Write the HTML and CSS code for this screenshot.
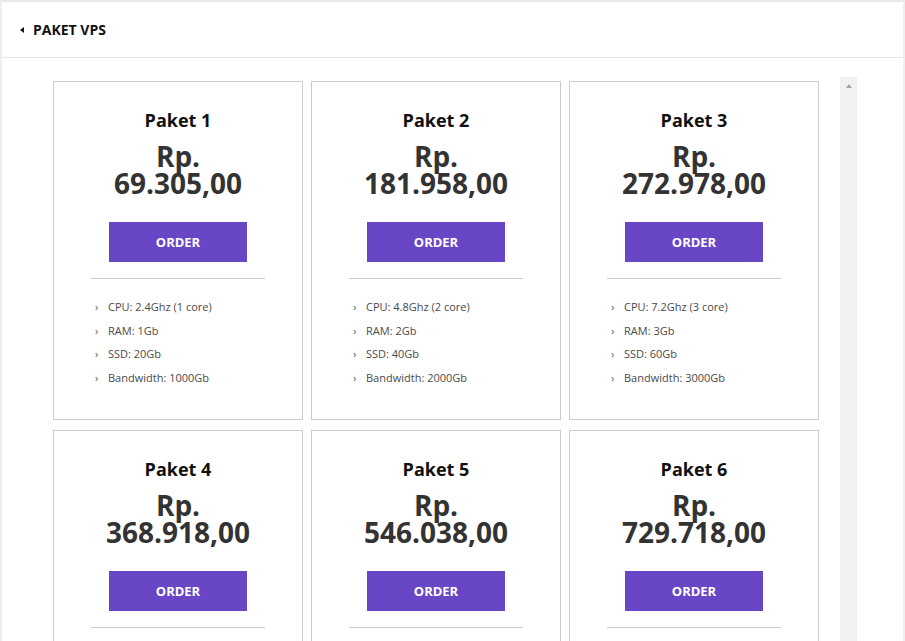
FILE: index.html
```html
<!DOCTYPE html>
<html lang="id">
<head>
<meta charset="utf-8">
<title>Paket VPS</title>
<link rel="stylesheet" href="styles.css">
</head>
<body>
<div class="frame">
  <header class="header">
    <span class="back"></span>
    <span class="header-title">PAKET VPS</span>
  </header>
  <main class="main">
    <div class="scroller">
      <div class="grid">
        <div class="card">
          <h2 class="card-title">Paket 1</h2>
          <div class="price">Rp.<br>69.305,00</div>
          <a class="order">ORDER</a>
          <hr class="divider">
          <ul class="specs">
            <li>CPU: 2.4Ghz (1 core)</li>
            <li>RAM: 1Gb</li>
            <li>SSD: 20Gb</li>
            <li>Bandwidth: 1000Gb</li>
          </ul>
        </div>
        <div class="card">
          <h2 class="card-title">Paket 2</h2>
          <div class="price">Rp.<br>181.958,00</div>
          <a class="order">ORDER</a>
          <hr class="divider">
          <ul class="specs">
            <li>CPU: 4.8Ghz (2 core)</li>
            <li>RAM: 2Gb</li>
            <li>SSD: 40Gb</li>
            <li>Bandwidth: 2000Gb</li>
          </ul>
        </div>
        <div class="card">
          <h2 class="card-title">Paket 3</h2>
          <div class="price">Rp.<br>272.978,00</div>
          <a class="order">ORDER</a>
          <hr class="divider">
          <ul class="specs">
            <li>CPU: 7.2Ghz (3 core)</li>
            <li>RAM: 3Gb</li>
            <li>SSD: 60Gb</li>
            <li>Bandwidth: 3000Gb</li>
          </ul>
        </div>
        <div class="card">
          <h2 class="card-title">Paket 4</h2>
          <div class="price">Rp.<br>368.918,00</div>
          <a class="order">ORDER</a>
          <hr class="divider">
          <ul class="specs">
            <li>CPU: 9.6Ghz (4 core)</li>
            <li>RAM: 4Gb</li>
            <li>SSD: 80Gb</li>
            <li>Bandwidth: 4000Gb</li>
          </ul>
        </div>
        <div class="card">
          <h2 class="card-title">Paket 5</h2>
          <div class="price">Rp.<br>546.038,00</div>
          <a class="order">ORDER</a>
          <hr class="divider">
          <ul class="specs">
            <li>CPU: 12Ghz (5 core)</li>
            <li>RAM: 6Gb</li>
            <li>SSD: 120Gb</li>
            <li>Bandwidth: 5000Gb</li>
          </ul>
        </div>
        <div class="card">
          <h2 class="card-title">Paket 6</h2>
          <div class="price">Rp.<br>729.718,00</div>
          <a class="order">ORDER</a>
          <hr class="divider">
          <ul class="specs">
            <li>CPU: 14.4Ghz (6 core)</li>
            <li>RAM: 8Gb</li>
            <li>SSD: 160Gb</li>
            <li>Bandwidth: 6000Gb</li>
          </ul>
        </div>
      </div>
      <div class="scrollbar"><span class="scroll-up"></span></div>
    </div>
  </main>
</div>
</body>
</html>
```

FILE: styles.css
```css
html, body {
  margin: 0;
  padding: 0;
  height: 641px;
  overflow: hidden;
  background: #fff;
}

body {
  font-family: "Open Sans", "Noto Sans", sans-serif;
  color: #333;
}

.frame {
  box-sizing: border-box;
  height: 641px;
  border-top: 2px solid #e8e8e8;
  border-left: 2px solid #efefef;
  border-right: 2px solid #efefef;
  display: flex;
  flex-direction: column;
}

.header {
  box-sizing: border-box;
  height: 56px;
  border-bottom: 1px solid #e6e6e6;
  display: flex;
  align-items: center;
  padding-left: 18px;
  flex-shrink: 0;
}

.back {
  width: 0;
  height: 0;
  border-top: 3.5px solid transparent;
  border-bottom: 3.5px solid transparent;
  border-right: 4px solid #111;
  margin-right: 9px;
}

.header-title {
  font-size: 14px;
  font-weight: 700;
  color: #111;
}

.main {
  flex: 1;
  padding: 19px 0 0 47px;
  overflow: hidden;
}

.scroller {
  display: flex;
  height: 100%;
  overflow: hidden;
}

.grid {
  display: grid;
  grid-template-columns: repeat(3, 250px);
  column-gap: 8px;
  row-gap: 10px;
  padding: 4px 21px 0 4px;
  align-content: start;
}

.card {
  box-sizing: border-box;
  height: 339px;
  border: 1px solid #cccccc;
  display: flex;
  flex-direction: column;
  align-items: center;
  padding-top: 26px;
}

.card-title {
  margin: 0;
  font-size: 18px;
  line-height: 24px;
  font-weight: 700;
  color: #111;
}

.price {
  margin-top: 11px;
  font-size: 28px;
  line-height: 26.5px;
  font-weight: 700;
  color: #333;
  text-align: center;
}

.order {
  margin-top: 26px;
  width: 138px;
  height: 40px;
  background: #6846c5;
  color: #fff;
  font-size: 13px;
  font-weight: 700;
  display: flex;
  align-items: center;
  justify-content: center;
}

.divider {
  margin: 16px 0 0;
  width: 174px;
  border: 0;
  border-top: 1px solid #cccccc;
  height: 0;
}

.specs {
  list-style: none;
  margin: 16px 0 0;
  padding: 0 0 0 4px;
  width: 174px;
  box-sizing: border-box;
}

.specs li {
  font-size: 11px;
  line-height: 23.6px;
  color: #4a4a4a;
  display: flex;
  align-items: center;
}

.specs li::before {
  content: "\203A";
  color: #555;
  font-size: 11px;
  width: 13px;
  flex-shrink: 0;
}

.scrollbar {
  width: 17px;
  flex-shrink: 0;
  background: #f1f1f1;
  display: flex;
  justify-content: center;
  align-items: flex-start;
  padding-top: 7px;
  box-sizing: border-box;
}

.scroll-up {
  width: 0;
  height: 0;
  border-left: 3.5px solid transparent;
  border-right: 3.5px solid transparent;
  border-bottom: 4px solid #a3a3a3;
}
```
